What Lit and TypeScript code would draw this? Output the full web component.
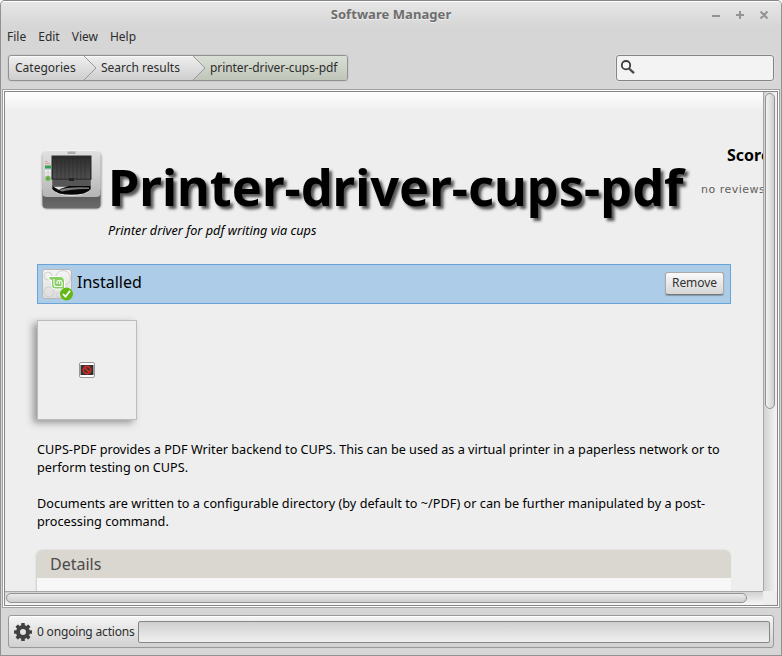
import { LitElement, html, css, svg } from "lit";
import { customElement } from "lit/decorators.js";

@customElement("printer-icon")
class PrinterIcon extends LitElement {
  static styles = css`:host{display:block;width:64px;height:66px} svg{display:block}`;
  render() {
    return html`<svg width="64" height="66" viewBox="0 0 64 66">
      <defs>
        <linearGradient id="b" x1="0" y1="0" x2="0" y2="1"><stop offset="0" stop-color="#e0e0e0"/><stop offset=".5" stop-color="#cecece"/><stop offset="1" stop-color="#b4b4b4"/></linearGradient>
        <linearGradient id="k" x1="0" y1="0" x2="0" y2="1"><stop offset="0" stop-color="#303030"/><stop offset="1" stop-color="#505050"/></linearGradient>
        <linearGradient id="d" x1="0" y1="0" x2="0" y2="1"><stop offset="0" stop-color="#505050"/><stop offset="1" stop-color="#6c6c6c"/></linearGradient>
        <filter id="s" x="-20%" y="-20%" width="140%" height="140%"><feGaussianBlur stdDeviation="1"/></filter>
      </defs>
      <rect x="3" y="5" width="59.5" height="57" rx="5" fill="#777" opacity=".65" filter="url(#s)"/>
      <rect x="3.5" y="40" width="58" height="21.5" rx="4" fill="url(#d)"/>
      <path d="M3.5 7Q3.500 3 8 3H57Q61.500 3 61.500 7V46Q61.500 50 57 50H8Q3.500 50 3.500 46Z" fill="url(#b)"/>
      <path d="M5 5.500Q6 3.500 8 3.500H57Q59 3.500 60 5.500" stroke="#f5f5f5" fill="none"/>
      <rect x="28.5" y="4.500" width="8" height="2.500" fill="#ababab"/>
      <path d="M13 33V41Q17 49 32.500 49Q48 49 52 41V33Z" fill="#e4e4e4"/>
      <path d="M12.5 8.500H52.500V32.500H51.500V42Q48 47.500 32.500 47.500Q17 47.500 13.500 42V32.500H12.500Z" fill="#2c2c2c"/>
      <rect x="14" y="12" width="37" height="20" fill="url(#k)"/>
      <path d="M18 12V32M22 12V32M26 12V32M30 12V32M34 12V32M38 12V32M42 12V32M46 12V32" stroke="#2c2c2c" opacity=".6"/>
      <rect x="13.500" y="32.500" width="38" height="6.500" fill="#565656"/>
      <path d="M12.500 32H52.500" stroke="#282828" opacity=".8"/>
      <path d="M13.500 39H51.500V42Q48 47.500 32.500 47.500Q17 47.500 13.500 42Z" fill="#070707"/>
      <path d="M14 39.500H30Q23 40.500 20 43Z" fill="#e0e0e0"/>
      <path d="M20 43Q28 39.500 50 40.500V42Q34 41.500 23 44.500Z" fill="#777"/>
      <rect x="30" y="31" width="5" height="3" fill="#222"/>
      <rect x="6" y="18.500" width="6" height="3" fill="#35a04f"/>
      <path d="M6 14.500H9M6 16.500H11" stroke="#dda69b"/>
      <path d="M6 23H8.500V25.500H6ZM9.500 23H12V25.500H9.500ZM6 26.500H8.500V28.500H6ZM9.500 26.500H12V28.500H9.500Z" fill="#eee"/>
      <circle cx="9" cy="31.500" r="2.300" fill="#55b732" stroke="#80aa70" stroke-width=".5"/>
    </svg>`;
  }
}

@customElement("app-root")
class AppRoot extends LitElement {
  static styles = css`
    :host{display:block;width:782px;height:656px;font:12px/16px "Noto Sans",sans-serif;color:#2d2d2d}
    *{box-sizing:border-box}
    svg{display:block;flex:none}
    .window{width:782px;height:656px;display:flex;flex-direction:column;border:1px solid #929292;border-top-color:#858585;border-radius:5px 5px 0 0;background:#d6d6d6;overflow:hidden}
    .titlebar{height:26px;flex:none;border-top:1px solid #fff;background:linear-gradient(#e6e6e6,#d6d6d6);display:grid;grid-template-columns:1fr auto 1fr;align-items:center;color:#6d6d6d;text-shadow:0 1px #eee}
    .title{grid-column:2;font-weight:700;font-size:13px;white-space:nowrap;letter-spacing:.06px;padding-bottom:2px}
    .controls{justify-self:end;padding-right:11px;padding-bottom:2px}
    .menu{height:22px;flex:none;display:flex;align-items:center;padding:0 0 3px 6px;gap:12px}
    .tools{height:40px;flex:none;display:flex;justify-content:space-between;align-items:flex-start;padding:6px 7px 0}
    .crumbs{height:26px;width:340px;display:flex;border:1px solid #919191;border-radius:3px;background:linear-gradient(#efefef,#cecece);overflow:hidden;box-shadow:inset 0 1px #fafafa,0 0 0 1px #cdcdcd}
    .crumb{display:flex;align-items:center;white-space:nowrap;padding-left:6px;height:24px}
    .crumb.first{width:75px}.crumb.second{width:96px;padding-left:4px}
    .sep{width:13px;height:24px}
    .current{flex:1;background:linear-gradient(#dadfd5,#bfc5b9);padding-left:4px;letter-spacing:-.07px}
    .search{width:158px;height:26px;border:1px solid #858585;border-radius:3px;background:#f3f3f3;padding:3px;box-shadow:0 0 0 1px #dedede}
    .frame{height:519px;flex:none;margin:0 1px 0 1px;border:1px solid #a0a0a0;background:#fff;padding:1px}
    .viewport{height:515px;border:1px solid #868686;display:grid;grid-template-columns:758px 1fr;grid-template-rows:499px 1fr;background:#eee}
    .page{overflow:hidden;background:linear-gradient(#fff,#eee 20px);color:#000;padding:55px 0 0 32px;font-size:12.67px;line-height:18px}
    .heading{height:117px;width:900px;display:flex}
    .name{width:596px;padding-left:5px}
    h1{font-size:50.5px;line-height:66px;margin:7px 0 1px;white-space:nowrap;text-shadow:3px 3px 3px #555}
    .summary{font-style:italic;line-height:18px;letter-spacing:.02px}
    .printer{padding:0 0 0 2px;width:66px;flex:none}
    .score{width:100px;padding-left:2px}
    .score b{display:block;font-size:16px;line-height:18px;margin-top:-1px;padding-left:26px}
    .score span{display:block;font:11px/14px "DejaVu Sans",sans-serif;color:#606060;letter-spacing:.5px;margin-top:19px;white-space:nowrap}
    .installed{width:694px;height:40px;border:1px solid #68a4d7;background:#adcce8;display:flex;align-items:center;padding:0 6px 0 4px;font-size:16px;line-height:20px}
    .status{flex:1;padding:0 0 4px 4px}
    button{font:12px/16px "Noto Sans",sans-serif;color:#303030;width:59px;height:23px;margin-bottom:2px;border:1px solid #aaa;border-bottom-color:#777;border-radius:3px;background:linear-gradient(#fafafa,#d6d6d6);padding:0 0 1px;box-shadow:0 1px 1px #8198aa;letter-spacing:-.05px}
    .shot{width:100px;height:100px;margin-top:16px;border:1px solid #bcbcbc;box-shadow:-4px 3px 7px #999;background:#eee;display:grid;place-items:center}
    p{margin:0;width:700px;height:54px;white-space:nowrap}
    p + p{letter-spacing:.02px}
    .copy{padding-top:20px}
    .details{width:694px;margin-top:2px;border-radius:6px 6px 0 0;background:#f7f7f7;box-shadow:-1px 0 2px #ccc;overflow:hidden;height:60px}
    h2{margin:0;height:28px;background:#dad6d0;color:#4b4b4b;font-weight:400;font-size:16px;line-height:28px;padding-left:13px}
    .vtrack{border-left:1px solid #a7a7a7;background:linear-gradient(90deg,#d2d2d2,#f5f5f5);padding:1px 2px 0 1px}
    .vthumb{height:316px;width:10px;border:1px solid #929292;border-radius:5px;background:linear-gradient(90deg,#f3f3f3,#cecece)}
    .htrack{border-top:1px solid #a7a7a7;background:linear-gradient(#d2d2d2,#f7f7f7);padding:1px}
    .hthumb{width:741px;height:10px;border:1px solid #929292;border-radius:5px;background:linear-gradient(#eaeaea,#cecece)}
    .footer{height:33px;flex:none;margin:7px 7px 0;border:1px solid #999;border-radius:3px;background:linear-gradient(#f5f5f5,#d1d1d1);display:flex;align-items:center;padding:0 3px 0 5px;box-shadow:inset 0 1px #fff}
    .footer span{width:106px;flex:none;padding-left:5px;white-space:nowrap;letter-spacing:-.18px}
    .progress{height:22px;flex:1;border:1px solid #868686;border-radius:2px;background:linear-gradient(#cfcfcf,#f0f0f0)}
    .badge{overflow:visible}
  `;
  separator(active: boolean) {
    return html`<svg class="sep" viewBox="0 0 13 24"><rect width="13" height="24" fill=${active ? "url(#g)" : "none"}/><defs><linearGradient id="g" x1="0" y1="0" x2="0" y2="1"><stop stop-color="#dadfd5"/><stop offset="1" stop-color="#bfc5b9"/></linearGradient><linearGradient id="h" x1="0" y1="0" x2="0" y2="1"><stop stop-color="#efefef"/><stop offset="1" stop-color="#cecece"/></linearGradient></defs><path d="M0 0L12 12L0 24Z" fill="url(#h)"/><path d="M0 0L12 12L0 24" stroke="#999" fill="none"/></svg>`;
  }
  render() {
    const teeth = Array.from({ length: 8 }, (_, i) => svg`<rect x="7.2" y="0" width="3.6" height="5" rx=".6" transform=${`rotate(${i * 45} 9 9)`}/>`);
    return html`<div class="window">
      <header class="titlebar"><div class="title">Software Manager</div><div class="controls"><svg width="60" height="12" viewBox="0 0 60 12" fill="none" stroke="#949494" stroke-width="2"><path d="M2 8H10M26 7H34M30 3V11M50.5 3.5L57.5 10.5M57.5 3.5L50.5 10.5"/></svg></div></header>
      <nav class="menu"><span>File</span><span>Edit</span><span>View</span><span>Help</span></nav>
      <div class="tools"><div class="crumbs"><div class="crumb first">Categories</div>${this.separator(false)}<div class="crumb second">Search results</div>${this.separator(true)}<div class="crumb current">printer-driver-cups-pdf</div></div>
        <div class="search"><svg width="16" height="16" viewBox="0 0 16 16"><circle cx="6" cy="6.2" r="4.2" fill="#fafafa" stroke="#3b3b3b" stroke-width="1.8"/><path d="M9 9.5L14 14.2" stroke="#4b4b4b" stroke-width="2.4"/></svg></div></div>
      <main class="frame"><div class="viewport"><section class="page">
        <div class="heading"><div class="printer"><printer-icon></printer-icon></div><div class="name"><h1>Printer-driver-cups-pdf</h1><div class="summary">Printer driver for pdf writing via cups</div></div><div class="score"><b>Score:</b><span>no reviews</span></div></div>
        <div class="installed"><svg class="badge" width="31" height="32" viewBox="0 0 31 32"><defs><linearGradient id="m" x2="0" y2="1"><stop stop-color="#f6f6f6"/><stop offset="1" stop-color="#dcdcdc"/></linearGradient></defs><rect x=".5" y="1.5" width="29" height="29" rx="2.5" fill="url(#m)" stroke="#b8b8b8"/><g fill="none" stroke="#d0d0d0"><circle cx="7" cy="24" r="5"/><circle cx="21" cy="10" r="7.5"/><circle cx="6" cy="8" r="4"/><circle cx="17" cy="27" r="2.5"/></g><path d="M7 8.500H18.500Q22.500 8.500 22.500 12.500V21H13Q9.500 21 9.500 17.500V12H7Z" fill="#86cf62" stroke="#fff"/><path d="M12 11V16.500Q12 18.500 14 18.500H20V14.500Q20 12.500 18.700 12.500Q17.500 12.500 17.500 14V16M17.500 14Q17.500 12.500 16.200 12.500Q15 12.500 15 14V16" fill="none" stroke="#fff" stroke-width="1.1"/><circle cx="24.5" cy="26" r="6.5" fill="#62b914"/><path d="M21 26L23.5 28.700L28 22.700" stroke="#fff" stroke-width="1.8" fill="none"/></svg><div class="status">Installed</div><button>Remove</button></div>
        <div class="shot"><svg width="16" height="16" viewBox="0 0 16 16"><rect x=".5" y=".5" width="15" height="15" rx="1.5" fill="#fff" stroke="#999"/><rect x="1.5" y="3" width="13" height="10" fill="#333"/><g stroke="#dc2a20" stroke-width="1.6" fill="none"><circle cx="8" cy="8" r="3.600"/><path d="M5.600 5.600L10.4 10.4"/></g></svg></div>
        <div class="copy"><p>CUPS-PDF provides a PDF Writer backend to CUPS. This can be used as a virtual printer in a paperless network or to<br>perform testing on CUPS.</p><p>Documents are written to a configurable directory (by default to ~/PDF) or can be further manipulated by a post-<br>processing command.</p></div>
        <section class="details"><h2>Details</h2></section>
      </section><div class="vtrack"><div class="vthumb"></div></div><div class="htrack"><div class="hthumb"></div></div><div></div></div></main>
      <footer class="footer"><svg width="18" height="18" viewBox="0 0 18 18" fill="#414141">${teeth}<path fill-rule="evenodd" d="M9 2A7 7 0 1 0 9 16A7 7 0 1 0 9 2ZM9 6A3 3 0 1 1 9 12A3 3 0 1 1 9 6Z"/></svg><span>0 ongoing actions</span><div class="progress"></div></footer>
    </div>`;
  }
}
